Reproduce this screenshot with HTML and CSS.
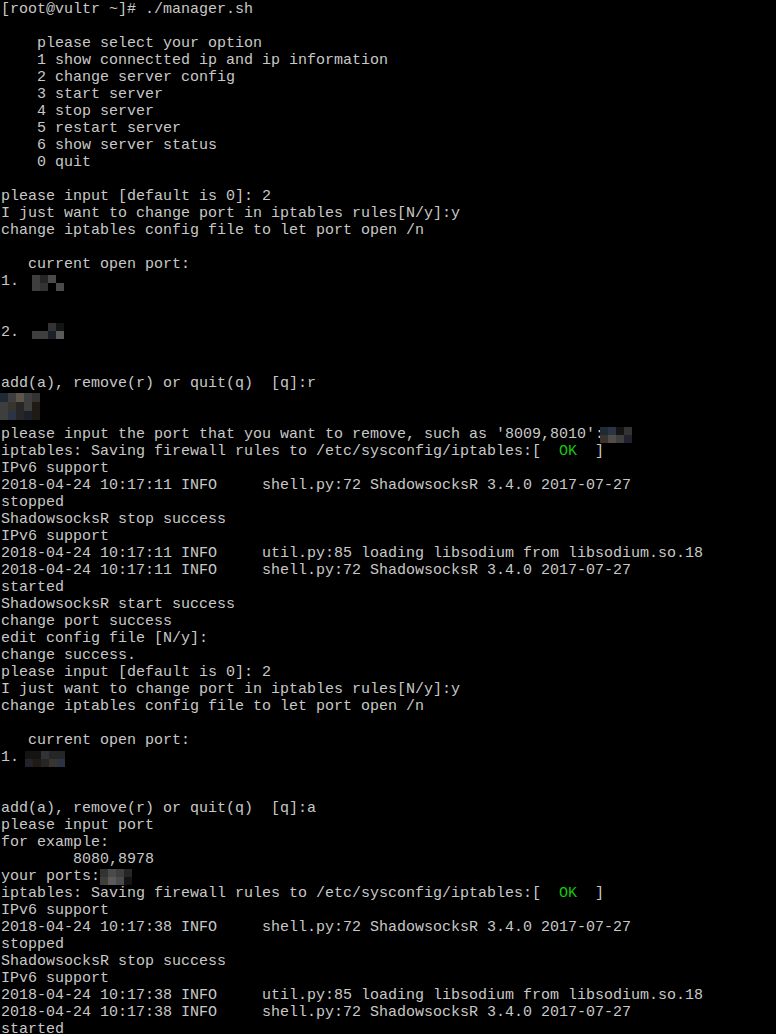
FILE: index.html
```html
<!DOCTYPE html>
<html>
<head>
<meta charset="utf-8">
<link rel="stylesheet" href="styles.css">
</head>
<body>
<div class="term">
<div class="l">[root@vultr ~]# ./manager.sh</div>
<div class="l"></div>
<div class="l">    please select your option</div>
<div class="l">    1 show connectted ip and ip information</div>
<div class="l">    2 change server config</div>
<div class="l">    3 start server</div>
<div class="l">    4 stop server</div>
<div class="l">    5 restart server</div>
<div class="l">    6 show server status</div>
<div class="l">    0 quit</div>
<div class="l"></div>
<div class="l">please input [default is 0]: 2</div>
<div class="l">I just want to change port in iptables rules[N/y]:y</div>
<div class="l">change iptables config file to let port open /n</div>
<div class="l"></div>
<div class="l">   current open port:</div>
<div class="l">1. <span class="mz c4 m1"><i class="k4"></i><i class="k2"></i><i class="k5"></i><i class="k0"></i><i class="k4"></i><i class="k3"></i><i class="k0"></i><i class="k5"></i></span></div>
<div class="l"></div>
<div class="l"></div>
<div class="l">2. <span class="mz c4 m2"><i class="k0"></i><i class="k0"></i><i class="k3"></i><i class="k1"></i><i class="k4"></i><i class="k4"></i><i class="b3"></i><i class="k6"></i></span></div>
<div class="l"></div>
<div class="l"></div>
<div class="l">add(a), remove(r) or quit(q)  [q]:r</div>
<div class="l"><span class="mz c5 m3"><i class="b1"></i><i class="k4"></i><i class="t1"></i><i class="k4"></i><i class="k3"></i><i class="k4"></i><i class="w1"></i><i class="k2"></i><i class="k4"></i><i class="w2"></i><i class="k4"></i><i class="b2"></i><i class="k2"></i><i class="b3"></i><i class="w2"></i></span></div>
<div class="l"></div>
<div class="l">please input the port that you want to remove, such as '8009,8010':<span class="mz c4 m4"><i class="b1"></i><i class="b2"></i><i class="k1"></i><i class="k3"></i><i class="w1"></i><i class="t2"></i><i class="k4"></i><i class="b4"></i></span></div>
<div class="l">iptables: Saving firewall rules to /etc/sysconfig/iptables:[  <span class="ok">OK</span>  ]</div>
<div class="l">IPv6 support</div>
<div class="l">2018-04-24 10:17:11 INFO     shell.py:72 ShadowsocksR 3.4.0 2017-07-27</div>
<div class="l">stopped</div>
<div class="l">ShadowsocksR stop success</div>
<div class="l">IPv6 support</div>
<div class="l">2018-04-24 10:17:11 INFO     util.py:85 loading libsodium from libsodium.so.18</div>
<div class="l">2018-04-24 10:17:11 INFO     shell.py:72 ShadowsocksR 3.4.0 2017-07-27</div>
<div class="l">started</div>
<div class="l">ShadowsocksR start success</div>
<div class="l">change port success</div>
<div class="l">edit config file [N/y]:</div>
<div class="l">change success.</div>
<div class="l">please input [default is 0]: 2</div>
<div class="l">I just want to change port in iptables rules[N/y]:y</div>
<div class="l">change iptables config file to let port open /n</div>
<div class="l"></div>
<div class="l">   current open port:</div>
<div class="l">1.<span class="mz c5 m5"><i class="k1"></i><i class="k1"></i><i class="k3"></i><i class="k2"></i><i class="k2"></i><i class="b4"></i><i class="w2"></i><i class="k2"></i><i class="w1"></i><i class="b2"></i></span></div>
<div class="l"></div>
<div class="l"></div>
<div class="l">add(a), remove(r) or quit(q)  [q]:a</div>
<div class="l">please input port</div>
<div class="l">for example:</div>
<div class="l">        8080,8978</div>
<div class="l">your ports:<span class="mz c5 m6"><i class="k3"></i><i class="k5"></i><i class="k4"></i><i class="k2"></i><i class="k0"></i><i class="k4"></i><i class="k6"></i><i class="k5"></i><i class="k1"></i><i class="k0"></i></span></div>
<div class="l">iptables: Saving firewall rules to /etc/sysconfig/iptables:[  <span class="ok">OK</span>  ]</div>
<div class="l">IPv6 support</div>
<div class="l">2018-04-24 10:17:38 INFO     shell.py:72 ShadowsocksR 3.4.0 2017-07-27</div>
<div class="l">stopped</div>
<div class="l">ShadowsocksR stop success</div>
<div class="l">IPv6 support</div>
<div class="l">2018-04-24 10:17:38 INFO     util.py:85 loading libsodium from libsodium.so.18</div>
<div class="l">2018-04-24 10:17:38 INFO     shell.py:72 ShadowsocksR 3.4.0 2017-07-27</div>
<div class="l">started</div>
</div>
</body>
</html>
```
FILE: styles.css
```css
html, body {
  margin: 0;
  padding: 0;
  background: #000;
  height: 100%;
  overflow: hidden;
}
.term {
  background: #000;
  color: #c8c8c8;
  font-family: "Liberation Mono", "DejaVu Sans Mono", monospace;
  font-size: 15px;
  padding: 1px 0 0 1px;
}
.l {
  height: 17px;
  line-height: 17px;
  white-space: pre;
}
.ok { color: #16c60c; }
.mz {
  display: inline-grid;
  grid-auto-rows: 8px;
  vertical-align: top;
}
.mz i { display: block; }
.c4 { grid-template-columns: repeat(4, 8px); }
.c5 { grid-template-columns: repeat(5, 8px); }
.m1 { margin: 2px 0 0 4px; }
.m2 { margin: -1px 0 0 4px; }
.m3 { margin: 1px 0 0 -1px; grid-auto-rows: 9px; }
.m4 { margin: 1px 0 0 -4px; }
.m5 { margin: 2px 0 0 6px; }
.m6 { margin: 1px 0 0 0; }
.k0 { background: #000; }
.k1 { background: #141414; }
.k2 { background: #262626; }
.k3 { background: #333; }
.k4 { background: #3e3e3e; }
.k5 { background: #4a4a4a; }
.k6 { background: #5a5a5a; }
.t1 { background: #5c564a; }
.t2 { background: #524c46; }
.b1 { background: #1e2a36; }
.b2 { background: #2a3444; }
.b3 { background: #1c2028; }
.b4 { background: #22222e; }
.w1 { background: #3a3430; }
.w2 { background: #201a14; }
```
